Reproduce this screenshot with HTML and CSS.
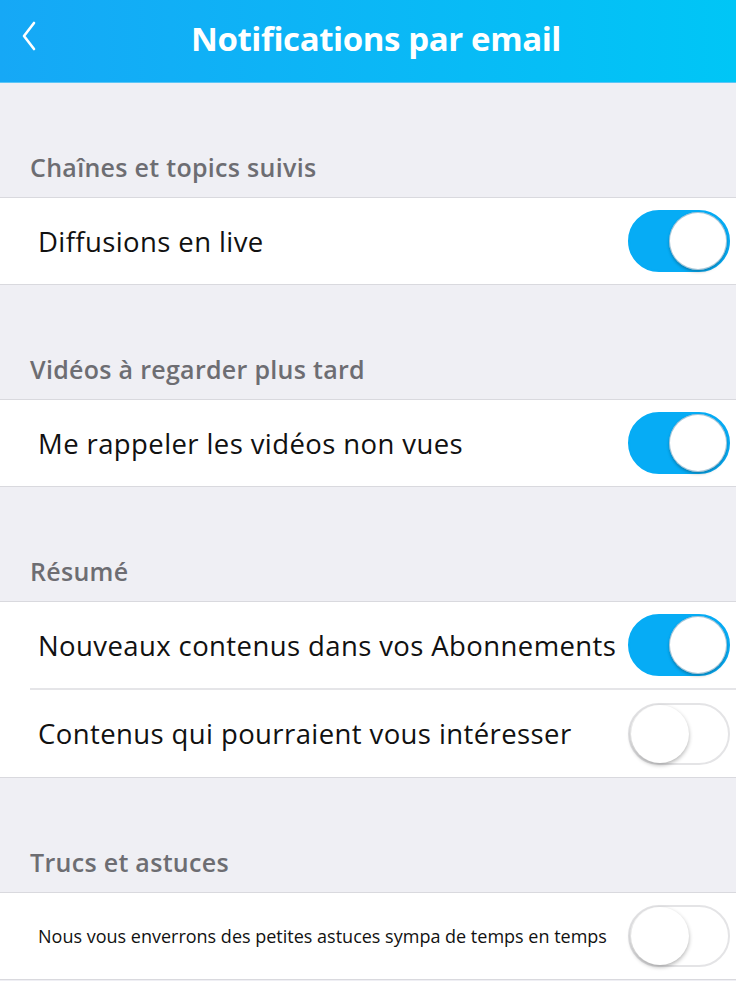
FILE: index.html
```html
<!DOCTYPE html>
<html lang="fr">
<head>
  <meta charset="UTF-8">
  <meta name="viewport" content="width=device-width, initial-scale=1.0">
  <title>Notifications par email</title>
  <link rel="stylesheet" href="styles.css">
</head>
<body>

<div class="topbar">
  <button class="back" aria-label="Retour">
    <svg width="16" height="30" viewBox="0 0 16 30"><path d="M13 2 L3 15 L13 28" fill="none" stroke="#fff" stroke-width="2.6" stroke-linecap="round" stroke-linejoin="round"/></svg>
  </button>
  <h1>Notifications par email</h1>
</div>

<div class="section-title">Chaînes et topics suivis</div>
<div class="group">
  <div class="row">
    <span class="label">Diffusions en live</span>
    <span class="switch on"><span class="knob"></span></span>
  </div>
</div>

<div class="section-title">Vidéos à regarder plus tard</div>
<div class="group">
  <div class="row">
    <span class="label">Me rappeler les vidéos non vues</span>
    <span class="switch on"><span class="knob"></span></span>
  </div>
</div>

<div class="section-title">Résumé</div>
<div class="group">
  <div class="row">
    <span class="label">Nouveaux contenus dans vos Abonnements</span>
    <span class="switch on"><span class="knob"></span></span>
  </div>
  <div class="row">
    <span class="label">Contenus qui pourraient vous intéresser</span>
    <span class="switch"><span class="knob"></span></span>
  </div>
</div>

<div class="section-title">Trucs et astuces</div>
<div class="group">
  <div class="row">
    <span class="label small">Nous vous enverrons des petites astuces sympa de temps en temps</span>
    <span class="switch"><span class="knob"></span></span>
  </div>
</div>

</body>
</html>
```

FILE: styles.css
```css
body {
  margin: 0;
  padding: 0;
  background: #efeff4;
  font-family: 'Open Sans', 'Noto Sans', Arial, sans-serif;
  overflow: hidden;
}
.topbar {
  height: 82px;
  background: linear-gradient(to right, #16a8f6, #00c6f6);
  display: flex;
  align-items: center;
  justify-content: center;
  position: relative;
  border-bottom: 1px solid #5cc6f7;
}
.topbar h1 {
  margin: 0;
  color: #fff;
  font-size: 33px;
  font-weight: 700;
  letter-spacing: -0.4px;
  padding: 0 0 6px 16px;
}
.back {
  position: absolute;
  left: 21px;
  top: 21px;
  background: none;
  border: none;
  padding: 0;
  cursor: pointer;
}
.section-title {
  padding: 69px 30px 15px;
  line-height: 30px;
  font-size: 25px;
  font-weight: 600;
  color: #6d6d72;
  letter-spacing: 0.3px;
}
.group {
  background: #fff;
  border-top: 1px solid #d9d9de;
  border-bottom: 1px solid #d9d9de;
}
.row {
  height: 86px;
  margin-left: 30px;
  padding-left: 8px;
  padding-right: 6px;
  display: flex;
  align-items: center;
  justify-content: space-between;
}
.row + .row {
  border-top: 2px solid #e5e5e8;
  height: 87px;
}
.label {
  font-size: 27.5px;
  color: #111;
  letter-spacing: 0.4px;
  white-space: nowrap;
}
.label.small {
  font-size: 18px;
  letter-spacing: 0;
}
.switch {
  width: 102px;
  height: 62px;
  border-radius: 31px;
  background: #fff;
  border: 2px solid #e4e4e6;
  box-sizing: border-box;
  display: flex;
  align-items: center;
  padding: 0 1px;
  flex-shrink: 0;
}
.switch.on {
  background: #06acf5;
  border-color: #06acf5;
  justify-content: flex-end;
}
.knob {
  width: 58px;
  height: 58px;
  border-radius: 50%;
  background: #fff;
  box-shadow: 0 2px 4px rgba(0,0,0,0.3);
}
.switch.on .knob {
  box-shadow: 0 2px 3px rgba(0,0,0,0.25), inset 0 0 0 1px rgba(0,90,140,0.35);
}
```
